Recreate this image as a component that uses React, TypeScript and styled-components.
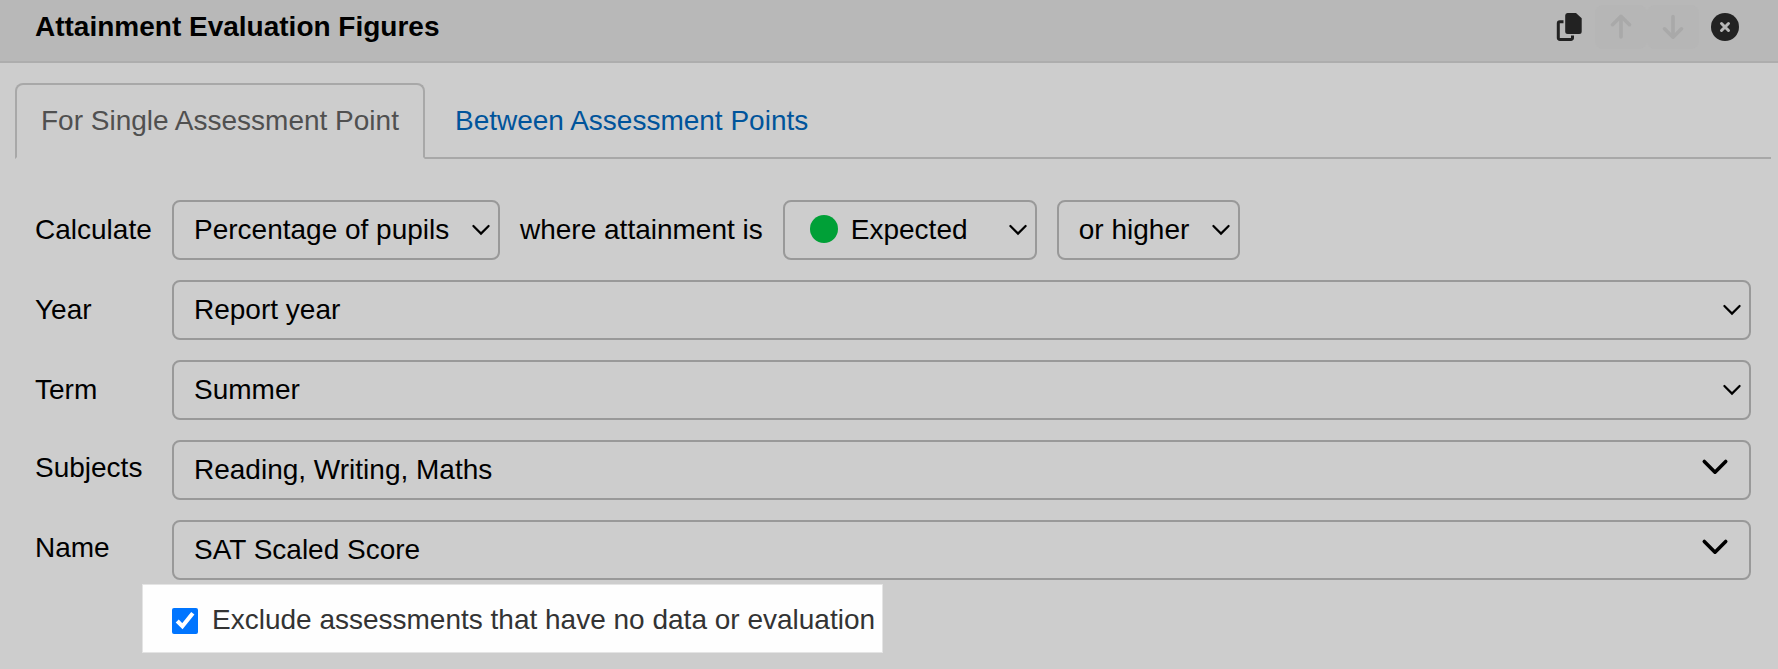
import React, { useState } from "react";
import styled, { createGlobalStyle } from "styled-components";

const GlobalStyle = createGlobalStyle`
  *, *::before, *::after {
    box-sizing: border-box;
  }
  body {
    margin: 0;
    background: #cdcdcd;
    color: #000;
    font-family: "Liberation Sans", Arial, Helvetica, sans-serif;
    font-size: 28px;
    line-height: 42px;
  }
  button, select, input {
    font: inherit;
    color: inherit;
    margin: 0;
  }
`;

const Header = styled.header`
  display: flex;
  align-items: flex-start;
  justify-content: space-between;
  height: 63px;
  padding: 5px 27px 0 35px;
  background: #b8b8b8;
  border-bottom: 2px solid #adadad;
`;

const Title = styled.h2`
  margin: 0;
  font-size: 28px;
  line-height: 44px;
  font-weight: 700;
`;

const Actions = styled.div`
  display: flex;
`;

const IconButton = styled.button`
  display: flex;
  align-items: center;
  justify-content: center;
  width: 52px;
  height: 44px;
  padding: 0;
  border: 0;
  border-radius: 8px;
  background: transparent;
  color: #222;

  &:disabled {
    background: #b6b6b6;
    color: #a9a9a9;
  }
`;

const Tabs = styled.nav`
  display: flex;
  gap: 4px;
  margin: 20px 7px 0 15px;
  border-bottom: 2px solid #a8a8a8;
`;

const Tab = styled.a<{ $active?: boolean }>`
  margin-bottom: -2px;
  padding: 16px 24px;
  border: 2px solid ${(p) => (p.$active ? "#a8a8a8" : "transparent")};
  border-bottom-color: ${(p) => (p.$active ? "#cdcdcd" : "transparent")};
  border-radius: 8px 8px 0 0;
  color: ${(p) => (p.$active ? "#505050" : "#00549b")};
  line-height: 40px;
  text-decoration: none;
`;

const Form = styled.form`
  display: flex;
  flex-direction: column;
  gap: 20px;
  padding: 41px 27px 0 35px;
`;

const Row = styled.div`
  display: grid;
  grid-template-columns: 117px 1fr;
  column-gap: 20px;
  align-items: center;
`;

const RowLabel = styled.label<{ $raised?: boolean }>`
  padding-bottom: ${(p) => (p.$raised ? "4px" : "0")};
`;

const Inline = styled.div`
  display: flex;
  align-items: center;
  gap: 20px;
`;

const SelectBox = styled.div<{ $width?: string }>`
  position: relative;
  width: ${(p) => p.$width ?? "100%"};
`;

const Select = styled.select<{ $withDot?: boolean }>`
  display: block;
  appearance: none;
  width: 100%;
  height: 60px;
  padding: 0 36px 0 ${(p) => (p.$withDot ? "66px" : "20px")};
  border: 2px solid #999;
  border-radius: 8px;
  background: transparent;
`;

const SelectArrow = styled.svg`
  position: absolute;
  top: 24px;
  right: 9px;
  pointer-events: none;
`;

const Dot = styled.span`
  position: absolute;
  top: 15px;
  left: 27px;
  width: 28px;
  height: 28px;
  border-radius: 50%;
  background: #00a037;
  pointer-events: none;
`;

const ComboButton = styled.button`
  display: flex;
  align-items: center;
  justify-content: space-between;
  width: 100%;
  height: 60px;
  padding: 0 20px;
  border: 2px solid #999;
  border-radius: 8px;
  background: transparent;
  text-align: left;
`;

const ComboArrow = styled.svg`
  margin-bottom: 6px;
`;

const Highlight = styled.div`
  align-self: flex-start;
  display: flex;
  align-items: center;
  gap: 14px;
  height: 69px;
  margin: -16px 0 0 107px;
  padding: 0 7px 0 29px;
  border: 1px solid #e4e4e4;
  background: #fefefe;
  color: #333;
`;

const Checkbox = styled.input`
  width: 26px;
  height: 26px;
  margin-top: 4px;
  accent-color: #0075ff;
`;

const CheckLabel = styled.label`
  padding-top: 2px;
  white-space: nowrap;
`;

type SelectFieldProps = {
  id: string;
  options: string[];
  width?: string;
  dot?: boolean;
  label?: string;
};

function SelectField({ id, options, width, dot, label }: SelectFieldProps) {
  return (
    <SelectBox $width={width}>
      <Select id={id} $withDot={dot} aria-label={label}>
        {options.map((option) => (
          <option key={option}>{option}</option>
        ))}
      </Select>
      {dot && <Dot />}
      <SelectArrow width="20" height="12" viewBox="0 0 20 12" fill="none" stroke="#000" strokeWidth="2.2" aria-hidden="true">
        <path d="M2.400 2L10 9.600 17.600 2" strokeLinecap="round" />
      </SelectArrow>
    </SelectBox>
  );
}

function ComboField({ id, value }: { id: string; value: string }) {
  return (
    <ComboButton id={id} type="button" aria-haspopup="listbox">
      {value}
      <ComboArrow width="28" height="18" viewBox="0 0 28 18" fill="none" stroke="#000" strokeWidth="3.6" aria-hidden="true">
        <path d="M3.3 3.5L14 14.2 24.7 3.5" strokeLinecap="round" strokeLinejoin="round" />
      </ComboArrow>
    </ComboButton>
  );
}

export default function App() {
  const [exclude, setExclude] = useState(true);

  return (
    <main>
      <GlobalStyle />
      <Header>
        <Title>Attainment Evaluation Figures</Title>
        <Actions>
          <IconButton type="button" aria-label="Duplicate">
            <svg width="28" height="28" viewBox="0 0 28 28">
              <path d="M8.500 8.700H4.800a1.500 1.500 0 0 0-1.500 1.500V25a1.500 1.500 0 0 0 1.500 1.500H16a1.500 1.500 0 0 0 1.500-1.500V22.500" fill="none" stroke="currentColor" strokeWidth="3" />
              <path d="M12.500 0H21l5.700 5.200V18.500a2.500 2.500 0 0 1-2.500 2.500H12.700a2.500 2.500 0 0 1-2.500-2.500V2.500A2.500 2.500 0 0 1 12.500 0z" fill="currentColor" />
            </svg>
          </IconButton>
          <IconButton type="button" aria-label="Move up" disabled>
            <svg width="24" height="28" viewBox="0 0 24 28" fill="none" stroke="currentColor" strokeWidth="3.6" strokeLinecap="round" strokeLinejoin="round">
              <path d="M12 24V3.500M3.500 11.700L12 3.300l8.500 8.400" />
            </svg>
          </IconButton>
          <IconButton type="button" aria-label="Move down" disabled>
            <svg width="24" height="28" viewBox="0 0 24 28" fill="none" stroke="currentColor" strokeWidth="3.6" strokeLinecap="round" strokeLinejoin="round">
              <path d="M12 3.500V24M3.500 15.800L12 24.200l8.500-8.400" />
            </svg>
          </IconButton>
          <IconButton type="button" aria-label="Remove">
            <svg width="28" height="28" viewBox="0 0 28 28">
              <circle cx="14" cy="14" r="14" fill="currentColor" />
              <path d="M10.500 10.500l7 7M17.500 10.500l-7 7" stroke="#b8b8b8" strokeWidth="3" strokeLinecap="round" />
            </svg>
          </IconButton>
        </Actions>
      </Header>

      <Tabs>
        <Tab href="#single" $active aria-current="page">For Single Assessment Point</Tab>
        <Tab href="#between">Between Assessment Points</Tab>
      </Tabs>

      <Form>
        <Row>
          <RowLabel htmlFor="calculate">Calculate</RowLabel>
          <Inline>
            <SelectField id="calculate" width="328px" options={["Percentage of pupils", "Number of pupils"]} />
            <label htmlFor="attainment">where attainment is</label>
            <SelectField id="attainment" width="254px" dot options={["Expected"]} />
            <SelectField id="comparison" width="183px" label="Comparison" options={["or higher", "or lower"]} />
          </Inline>
        </Row>
        <Row>
          <RowLabel htmlFor="year">Year</RowLabel>
          <SelectField id="year" options={["Report year"]} />
        </Row>
        <Row>
          <RowLabel htmlFor="term">Term</RowLabel>
          <SelectField id="term" options={["Summer", "Autumn", "Spring"]} />
        </Row>
        <Row>
          <RowLabel htmlFor="subjects" $raised>Subjects</RowLabel>
          <ComboField id="subjects" value="Reading, Writing, Maths" />
        </Row>
        <Row>
          <RowLabel htmlFor="name" $raised>Name</RowLabel>
          <ComboField id="name" value="SAT Scaled Score" />
        </Row>
        <Highlight>
          <Checkbox id="exclude" type="checkbox" checked={exclude} onChange={(e) => setExclude(e.target.checked)} />
          <CheckLabel htmlFor="exclude">Exclude assessments that have no data or evaluation</CheckLabel>
        </Highlight>
      </Form>
    </main>
  );
}
